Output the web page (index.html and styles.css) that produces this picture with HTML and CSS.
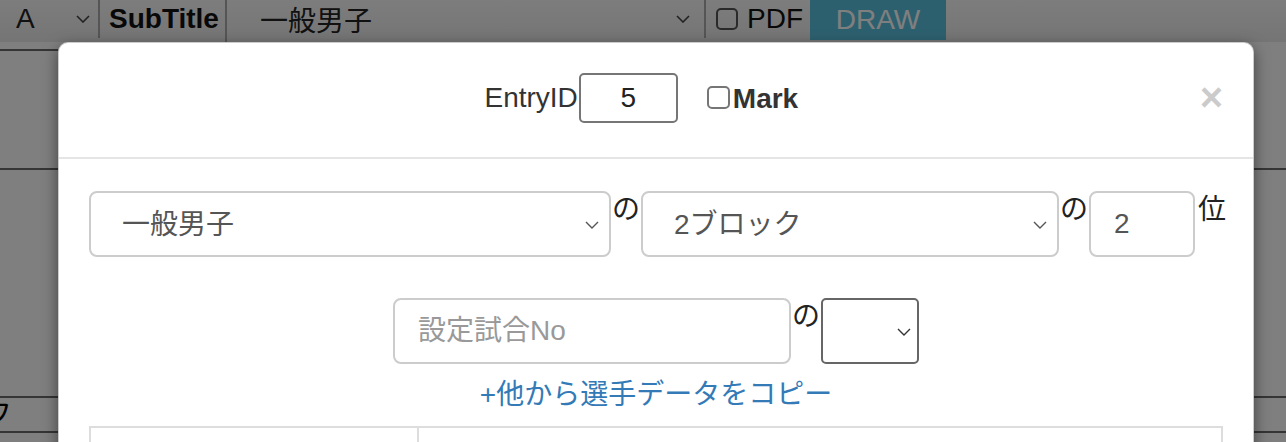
FILE: index.html
```html
<!DOCTYPE html>
<html lang="ja">
<head>
<meta charset="UTF-8">
<title>Entry</title>
<link rel="stylesheet" href="styles.css">
</head>
<body>
<div class="page">
    <div class="toolbar">
        <div class="tb-select tb-font">
            <span>A</span>
            <svg class="chev" width="14" height="8" viewBox="0 0 14 8"><path d="M1 1l6 6 6-6" fill="none" stroke="#444" stroke-width="1.6"/></svg>
        </div>
        <div class="tb-label">SubTitle</div>
        <div class="tb-select tb-sub">
            <span>一般男子</span>
            <svg class="chev" width="14" height="8" viewBox="0 0 14 8"><path d="M1 1l6 6 6-6" fill="none" stroke="#444" stroke-width="1.6"/></svg>
        </div>
        <div class="tb-pdf"><span class="tb-box"></span>PDF</div>
        <button class="tb-draw">DRAW</button>
    </div>
    <div class="bg-rows">
        <div class="bg-row row-a"><div class="bg-cell"></div></div>
        <div class="bg-row row-b"></div>
        <div class="bg-row row-c"></div>
        <div class="bg-row row-d"><span class="bg-text">フ</span></div>
    </div>
</div>

<div class="backdrop"></div>

<div class="modal">
    <div class="modal-header">
        <div class="entry">
            <label class="entry-label" for="entryId">EntryID</label>
            <input class="entry-id" id="entryId" type="text" value="5">
            <label class="mark"><input type="checkbox" class="check">Mark</label>
        </div>
        <button class="close" type="button">&times;</button>
    </div>
    <div class="modal-body">
        <div class="rank-row">
            <div class="sel sel-class">
                <select><option>一般男子</option></select>
                <svg class="chev" width="14" height="8" viewBox="0 0 14 8"><path d="M1 1l6 6 6-6" fill="none" stroke="#555" stroke-width="1.4"/></svg>
            </div>
            <span class="no">の</span>
            <div class="sel sel-block">
                <select><option>2ブロック</option></select>
                <svg class="chev" width="14" height="8" viewBox="0 0 14 8"><path d="M1 1l6 6 6-6" fill="none" stroke="#555" stroke-width="1.4"/></svg>
            </div>
            <span class="no">の</span>
            <input class="field rank" type="text" value="2">
            <span class="no no-last">位</span>
        </div>

        <div class="match-row">
            <input class="field match" type="text" placeholder="設定試合No">
            <span class="no">の</span>
            <div class="sel sel-side">
                <select><option></option></select>
                <svg class="chev" width="14" height="8" viewBox="0 0 14 8"><path d="M1 1l6 6 6-6" fill="none" stroke="#333" stroke-width="1.4"/></svg>
            </div>
        </div>

        <a class="copy-link" href="#">+他から選手データをコピー</a>

        <table class="players">
            <tr><td class="col-name"></td><td></td></tr>
        </table>
    </div>
</div>
</body>
</html>
```

FILE: styles.css
```css
html, body {
    margin: 0;
    padding: 0;
    height: 100%;
    overflow: hidden;
}
body {
    font-family: "Liberation Sans", "Noto Sans CJK JP", sans-serif;
    font-size: 28px;
    color: #333;
    background-color: #fff;
    position: relative;
}

/* page behind the dialog */
.toolbar {
    display: flex;
    height: 42px;
    background: linear-gradient(#fafafa, #eaeaea);
}
.tb-select {
    display: flex;
    align-items: center;
    justify-content: space-between;
    box-sizing: border-box;
    height: 38px;
    color: #222;
}
.tb-font {
    width: 100px;
    padding: 0 8px 0 16px;
    border-right: 2px solid #aaa;
}
.tb-sub {
    width: 479px;
    padding: 0 14px 0 33px;
    border-right: 2px solid #aaa;
}
.tb-label {
    width: 127px;
    box-sizing: border-box;
    padding-left: 9px;
    font-weight: bold;
    line-height: 38px;
    color: #111;
    border-right: 2px solid #aaa;
}
.tb-pdf {
    display: flex;
    align-items: center;
    height: 38px;
    padding-left: 10px;
    width: 104px;
    box-sizing: border-box;
    color: #111;
}
.tb-box {
    width: 22px;
    height: 22px;
    border: 2px solid #555;
    border-radius: 5px;
    box-sizing: border-box;
    margin-right: 9px;
}
.tb-draw {
    width: 136px;
    height: 40px;
    border: none;
    background-color: #5bc0de;
    color: #fff;
    font-family: inherit;
    font-size: 28px;
    padding: 0;
}
.bg-row {
    border-bottom: 2px solid #6a6a6a;
    box-sizing: border-box;
}
.row-a {
    height: 7px;
    border-bottom: none;
}
.row-a .bg-cell {
    width: 58px;
    height: 7px;
    border-bottom: 2px solid #6a6a6a;
}
.row-b { height: 121px; }
.row-c { height: 228px; }
.row-d {
    height: 35px;
    line-height: 33px;
    color: #000;
    overflow: hidden;
}
.bg-text {
    margin-left: -16px;
}

.backdrop {
    position: absolute;
    inset: 0;
    background-color: rgba(0, 0, 0, 0.5);
}

/* dialog */
.modal {
    position: absolute;
    left: 58px;
    top: 42px;
    width: 1196px;
    height: 600px;
    box-sizing: border-box;
    background-color: #fff;
    border: 1px solid rgba(0, 0, 0, 0.2);
    border-radius: 10px;
    box-shadow: 0 5px 15px rgba(0, 0, 0, 0.5);
}
.modal-header {
    display: flex;
    align-items: flex-start;
    padding: 30px 30px 34px;
    border-bottom: 2px solid #e5e5e5;
}
.entry {
    flex: 1;
    display: flex;
    justify-content: center;
    align-items: center;
    height: 50px;
    margin-right: 6px;
}
.entry-label {
    margin-right: 1px;
}
.entry-id {
    width: 99px;
    height: 50px;
    box-sizing: border-box;
    border: 2px solid #767676;
    border-radius: 5px;
    font-family: inherit;
    font-size: 28px;
    color: #222;
    text-align: center;
    padding: 0;
}
.mark {
    display: flex;
    align-items: center;
    margin-left: 29px;
    font-weight: bold;
    position: relative;
    top: 1px;
}
.check {
    appearance: none;
    width: 23px;
    height: 23px;
    margin: 0 3px 3px 0;
    border: 2px solid #767676;
    border-radius: 5px;
    box-sizing: border-box;
}
.close {
    background: none;
    border: none;
    padding: 0;
    margin-top: 4px;
    font-family: "Liberation Sans", sans-serif;
    font-size: 40px;
    font-weight: bold;
    line-height: 40px;
    color: #000;
    opacity: 0.2;
}

.modal-body {
    padding: 32px 30px 0;
}
.rank-row, .match-row {
    display: flex;
    align-items: flex-start;
}
.rank-row > *, .match-row > * {
    flex-shrink: 0;
}
.match-row {
    justify-content: center;
    margin-top: 41px;
}
.no {
    width: 30px;
    text-align: center;
    line-height: 38px;
    color: #222;
}
.no-last {
    width: auto;
    margin-left: 3px;
}
.sel {
    position: relative;
}
.sel select {
    appearance: none;
    display: block;
    width: 100%;
    height: 66px;
    box-sizing: border-box;
    border: 2px solid #ccc;
    border-radius: 8px;
    background-color: #fff;
    padding: 0 0 0 31px;
    font-family: inherit;
    font-size: 28px;
    color: #555;
}
.sel .chev {
    position: absolute;
    right: 12px;
    top: 30px;
}
.sel-class { width: 522px; }
.sel-block { width: 418px; }
.sel-side { width: 98px; }
.sel-side select {
    border-color: #666;
    border-radius: 5px;
}
.sel-side .chev {
    right: 8px;
}
.field {
    height: 66px;
    box-sizing: border-box;
    border: 2px solid #ccc;
    border-radius: 8px;
    padding: 0 23px;
    font-family: inherit;
    font-size: 28px;
    color: #555;
}
.field::placeholder {
    color: #999;
}
.rank { width: 106px; }
.match { width: 398px; }

.copy-link {
    display: block;
    text-align: center;
    margin-top: 12px;
    line-height: 38px;
    color: #337ab7;
    text-decoration: none;
}
.players {
    width: 100%;
    margin-top: 12px;
    border-collapse: collapse;
}
.players td {
    border: 2px solid #ddd;
    height: 60px;
}
.players .col-name {
    width: 324px;
}
```
